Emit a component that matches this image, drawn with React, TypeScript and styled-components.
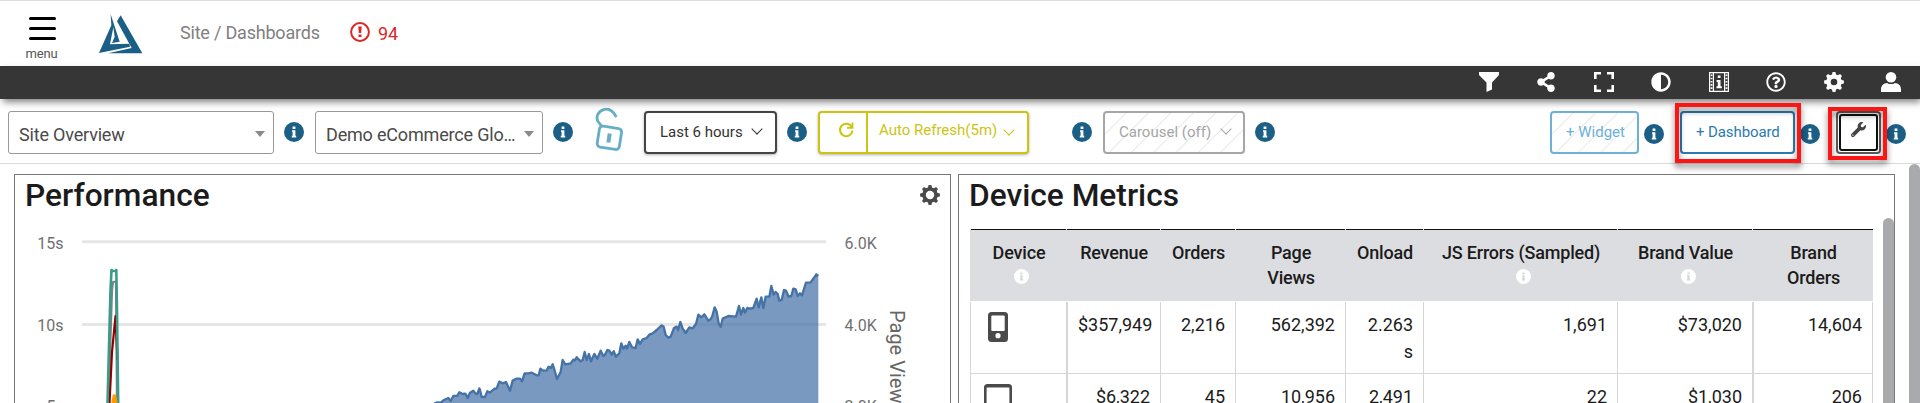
import React from 'react';
import styled, { createGlobalStyle, css } from 'styled-components';
import { FaShareAlt, FaAdjust, FaRegQuestionCircle, FaWrench } from 'react-icons/fa';

const Global = createGlobalStyle`
  * { box-sizing: border-box; }
  html, body { margin: 0; height: 100%; overflow: hidden; }
  body { background: #fff; font-family: Roboto, "Liberation Sans", sans-serif; color: #1b1b1b; }
  svg { display: block; flex: none; }
`;

const Page = styled.div`
  display: flex;
  flex-direction: column;
  width: 1920px;
  height: 403px;
  overflow: hidden;
`;

const Header = styled.header`
  display: flex;
  flex: none;
  height: 66px;
  border-top: 1px solid #dcdcdc;
  padding-left: 26px;
`;

const MenuButton = styled.div`
  width: 31px;
  padding-top: 16px;
  display: flex;
  flex-direction: column;
  align-items: center;
  font-size: 13px;
  line-height: 15px;
  letter-spacing: -0.2px;
  color: #555;
`;

const Bars = styled.div`
  display: grid;
  gap: 7px;
  margin: 0 0 6px 1px;
  i { display: block; width: 27px; height: 3px; border-radius: 1.5px; background: #000; }
`;

const LogoBox = styled.div`
  margin: 9px 0 0 37px;
`;

const Breadcrumb = styled.div`
  margin: 21px 0 0 32px;
  width: 170px;
  font-size: 18px;
  line-height: 22px;
  letter-spacing: -0.2px;
  color: #808080;
  white-space: nowrap;
`;

const Alerts = styled.div`
  display: flex;
  gap: 8px;
  padding-top: 21px;
  font-size: 18px;
  line-height: 24px;
  color: #dc2626;
`;

const IconBar = styled.nav`
  position: relative;
  z-index: 1;
  flex: none;
  height: 33px;
  padding: 0 19px 2px 1479px;
  display: flex;
  align-items: center;
  justify-content: space-between;
  background: #363636;
  color: #fff;
  box-shadow: 2px 4px 7px -1px rgba(0, 0, 0, 0.5);
`;

const Toolbar = styled.div`
  display: flex;
  flex: none;
  height: 65px;
  padding: 12px 0 0 8px;
  border-bottom: 1px solid #d9d9d9;
  white-space: nowrap;
`;

const control = css`
  height: 43px;
  border-radius: 4px;
  display: flex;
`;

const Select = styled.div<{ $w: number; $l?: number }>`
  ${control}
  width: ${p => p.$w}px;
  margin-left: ${p => p.$l ?? 0}px;
  border: 1px solid #999;
  border-radius: 3px;
  padding: 3px 8px 0 10px;
  align-items: center;
  justify-content: space-between;
  font-size: 18px;
  letter-spacing: -0.18px;
  color: #4a4a4a;
`;

const Caret = styled.i`
  border: 5px solid transparent;
  border-top: 6px solid #8a8a8a;
  border-bottom: 0;
`;

const InfoDot = styled.div<{ $l: number; $top?: number }>`
  width: 20px;
  height: 20px;
  margin: ${p => p.$top ?? 11}px 0 0 ${p => p.$l}px;
`;

const LockBox = styled.div`
  width: 31px;
  margin: -4px 0 0 22px;
`;

const Button = styled.div<{ $w: number; $l: number; $c: string; $hatch?: boolean; $flat?: boolean; $b?: string }>`
  ${control}
  width: ${p => p.$w}px;
  margin-left: ${p => p.$l}px;
  border: 2px solid ${p => p.$b ?? p.$c};
  color: ${p => p.$c};
  font-size: 15px;
  line-height: 38px;
  padding-left: 14px;
  box-shadow: ${p => (p.$flat ? 'none' : '0 1px 3px rgba(0,0,0,.3)')};
  background: ${p => p.$hatch
    ? 'repeating-linear-gradient(135deg, #fff 0 14px, #ececec 14.6px 15.2px, #fff 15.8px)'
    : '#fff'};
`;

const ButtonText = styled.span<{ $s?: number }>`
  letter-spacing: ${p => p.$s ?? 0}px;
`;

const Chevron = styled.i<{ $l: number; $top: number }>`
  width: 8px;
  height: 8px;
  margin: ${p => p.$top}px 0 0 ${p => p.$l}px;
  border: solid currentColor;
  border-width: 0 1.5px 1.5px 0;
  transform: rotate(45deg);
`;

const RefreshCell = styled.span`
  width: 48px;
  margin-left: -14px;
  padding: 8px 0 0 17px;
  border-right: 2px solid #cbc413;
`;

const RefreshText = styled.span`
  display: flex;
  padding-left: 11px;
  line-height: 34px;
`;

const ToolButton = styled.div`
  ${control}
  width: 45px;
  margin-left: 16px;
  border: 2px solid #5a5a5a;
  padding: 1px;
`;

const ToolInner = styled.div`
  flex: 1;
  border: 2px solid #111;
  border-radius: 3px;
  padding: 6px 0 0 10px;
  color: #444;
`;

const Callout = styled.div<{ $l: number; $t: number; $w: number; $h: number }>`
  position: absolute;
  z-index: 2;
  left: ${p => p.$l}px;
  top: ${p => p.$t}px;
  width: ${p => p.$w}px;
  height: ${p => p.$h}px;
  border: 4px solid #fb1515;
  filter: drop-shadow(0 4px 3px rgba(0, 0, 0, 0.5));
`;

const Main = styled.main`
  display: flex;
  flex: 1;
  min-height: 0;
  align-items: flex-start;
  padding-left: 14px;
`;

const Panel = styled.section<{ $w: number; $l?: number }>`
  width: ${p => p.$w}px;
  height: 300px;
  margin: 10px 0 0 ${p => p.$l ?? 0}px;
  border: 1px solid #777;
`;

const PanelHead = styled.div`
  display: flex;
  justify-content: space-between;
  height: 43px;
  padding: 0 10px;
`;

const Title = styled.h2`
  margin: 0;
  font-size: 31.7px;
  font-weight: 500;
  line-height: 42px;
`;

const GearBox = styled.div`
  padding-top: 10px;
`;

const TableArea = styled.div`
  display: flex;
  justify-content: space-between;
`;

const Table = styled.div`
  width: 903px;
  margin: 11px 0 0 11px;
`;

const Row = styled.div`
  display: grid;
  grid-template-columns: 96px 94px 75px 110px 78px 194px 135px 121px;
`;

const HeadCell = styled.div`
  height: 72px;
  margin-bottom: 1px;
  padding: 11px 12px 0 14px;
  background: linear-gradient(#111, #111) 1px 0 / calc(100% - 1px) 1px no-repeat, #dcdde0;
  font-size: 18px;
  font-weight: 500;
  line-height: 25px;
  letter-spacing: -0.18px;
  text-align: center;
`;

const HeadLine = styled.div`
  display: flex;
  justify-content: center;
  white-space: nowrap;
`;

const HeadInfo = styled.div`
  display: flex;
  justify-content: center;
  padding: 4px 0 0 5px;
`;

const Cell = styled.div<{ $thick?: boolean; $last?: boolean }>`
  height: 72px;
  padding: 9px 10px 0 10px;
  border-left: ${p => (p.$thick ? 2 : 1)}px solid #d6d6d6;
  border-right: ${p => (p.$last ? 1 : 0)}px solid #d6d6d6;
  border-bottom: 1px solid #d6d6d6;
  font-size: 18px;
  line-height: 27px;
  text-align: right;
`;

const DeviceIcon = styled.div<{ $l: number }>`
  padding: 1px 0 0 ${p => p.$l}px;
`;

const Thumb = styled.div<{ $w: number; $l?: number }>`
  align-self: stretch;
  width: ${p => p.$w}px;
  height: 260px;
  margin-left: ${p => p.$l ?? 0}px;
  border-radius: 6px;
  background: #a9aaae;
`;

const Info = ({ size = 20, bg = '#1b5f86', fg = '#fff' }) => (
  <svg width={size} height={size} viewBox="0 0 20 20">
    <circle cx="10" cy="10" r="10" fill={bg} />
    <path d="M8.6 4.6h2.8v2.4H8.6zM8 8.2h3.4v5.6h.8v1.6H7.8v-1.6h.8V9.8H8z" fill={fg} />
  </svg>
);

const gearPath = (outer: number, inner: number) =>
  Array.from({ length: 8 }, (_, k) => {
    const pt = (r: number, deg: number) => {
      const a = ((k * 45 + deg) * Math.PI) / 180;
      return `${(10 + r * Math.cos(a)).toFixed(2)} ${(10 + r * Math.sin(a)).toFixed(2)}`;
    };
    return `${pt(inner, -15)} L${pt(outer, -8)} L${pt(outer, 8)} L${pt(inner, 15)}`;
  }).join(' L');

const Gear = ({ color, hole }: { color: string; hole: number }) => (
  <svg width="20" height="20" viewBox="0 0 20 20">
    <path
      fill={color}
      fillRule="evenodd"
      d={`M${gearPath(10, 7.8)}Z M${10 - hole} 10a${hole} ${hole} 0 1 0 ${hole * 2} 0a${hole} ${hole} 0 1 0 ${-hole * 2} 0Z`}
    />
  </svg>
);

const Logo = () => (
  <svg width="54" height="48" viewBox="0 0 162 144" fill="#1b5f86">
    <path d="M50 13 L77 95 L54 99 L62 80 L58 52 L48 103 L106 101 L108 110 L15 129 L52 46 Z" />
    <path d="M80 16 L145 130 H42 L113 114 L69 34 Z" />
  </svg>
);

const Lock = () => (
  <svg width="31" height="48" viewBox="0 0 31 48" fill="none" stroke="#65afc4" strokeWidth="2.8">
    <rect x="3.2" y="20.2" width="22.4" height="21.2" rx="3.5" transform="rotate(9 14.4 30.8)" />
    <path d="M7 19.5 L3 14.5 C.5 10 3 4.500 8.500 2.600 C14 .8 18 3.500 21.300 10.200" />
    <path d="M14.700 26.500 L13.400 35.500" strokeWidth="4" />
  </svg>
);

const AREA =
  '-135,699 -128,697 -118,698 -108,690 -95,684 -88,693 -80,678 -68,677 -62,667 -52,672 -44,671 -37,684 -30,668 -20,662 -14,670 -8,672 -2,655 0,660 5,681 15,681 22,664 30,668 42,657 50,655 58,635 68,640 78,636 90,662 98,632 110,626 120,626 126,634 134,610 145,610 155,608 170,616 176,616 181,596 190,602 200,601 206,590 212,594 218,583 222,595 231,627 242,606 248,570 256,583 272,580 280,569 285,571 290,562 302,574 308,570 314,546 320,570 327,552 333,574 343,552 352,566 362,542 370,558 375,554 382,540 388,542 395,554 401,544 408,560 418,550 424,520 430,536 437,527 441,536 448,516 456,532 467,534 473,508 480,522 488,508 500,504 508,494 518,490 530,480 545,466 551,470 557,495 565,503 572,500 582,474 590,470 594,480 601,456 608,476 617,489 628,472 638,475 648,462 655,434 664,442 673,433 685,452 692,448 697,438 704,412 710,425 716,460 722,470 728,446 745,438 768,440 777,408 783,434 790,414 795,428 802,414 810,416 820,414 830,386 836,412 844,382 850,414 857,380 868,380 874,348 881,374 887,366 893,372 898,392 905,390 912,360 918,362 926,380 934,378 940,356 947,358 953,378 960,370 966,376 978,338 992,337 1009,313 1015,318';

const AxisLabel = styled.text`
  font-size: 16px;
  fill: #707070;
`;

const AxisTitle = styled.text`
  font-size: 20px;
  fill: #666;
`;

const PerformanceChart = () => (
  <svg width="935" height="185" viewBox="15 218 935 185">
    <path d="M82 241.700H826M82 324.500H826" stroke="#e6e6e6" strokeWidth="3" />
    <g transform="translate(480 170) scale(.33333)">
      <polygon points={`-150,760 -143,712 ${AREA} 1015,760`} fill="#4572a7" fillOpacity=".72" />
      <polyline points={`-150,760 -143,712 ${AREA}`} fill="none" stroke="#4572a7" strokeWidth="7" strokeLinejoin="round" />
    </g>
    <g fill="none" strokeWidth="2.200" strokeLinejoin="round">
      <path d="M108.500 403 L112 290 L113 282 L116 281.500 L117 403" stroke="#808080" />
      <path d="M109.500 403 L112 352 L115.500 316 L117.500 360" stroke="#8b0000" />
      <path d="M107.500 403 L110.500 290 L111.500 270 L113 271 L115.500 271 L116.300 270 L117 310 L118.200 403" stroke="#3a9b8a" strokeWidth="2.600" />
      <path d="M113 403 L114.300 396 L116 403" stroke="#ff9900" strokeWidth="3.500" />
    </g>
    <AxisLabel x="63.500" y="248.500" textAnchor="end">15s</AxisLabel>
    <AxisLabel x="63.500" y="331" textAnchor="end">10s</AxisLabel>
    <AxisLabel x="55.500" y="412" textAnchor="end">5</AxisLabel>
    <AxisLabel x="844.500" y="248.500">6.0K</AxisLabel>
    <AxisLabel x="844.500" y="331">4.0K</AxisLabel>
    <AxisLabel x="844.500" y="412">2.0K</AxisLabel>
    <AxisTitle transform="translate(890 310) rotate(90)">Page Views</AxisTitle>
  </svg>
);

const columns: { lines: string[]; info?: boolean }[] = [
  { lines: ['Device'], info: true },
  { lines: ['Revenue'] },
  { lines: ['Orders'] },
  { lines: ['Page', 'Views'] },
  { lines: ['Onload'] },
  { lines: ['JS Errors (Sampled)'], info: true },
  { lines: ['Brand Value'], info: true },
  { lines: ['Brand', 'Orders'] },
];

const rows = [
  ['$357,949', '2,216', '562,392', '2.263 s', '1,691', '$73,020', '14,604'],
  ['$6,322', '45', '10,956', '2,491', '22', '$1,030', '206'],
];

const Phone = () => (
  <svg width="20" height="30" viewBox="0 0 20 30">
    <rect width="20" height="30" rx="3.500" fill="#4a4a4a" />
    <rect x="3.300" y="3.500" width="13.400" height="15.500" rx="1" fill="#fff" />
    <circle cx="10" cy="23.700" r="2.600" fill="#fff" />
  </svg>
);

const Tablet = () => (
  <svg width="28" height="34" viewBox="0 0 28 34">
    <rect width="28" height="38" rx="3.500" fill="#4a4a4a" />
    <rect x="2.600" y="3.400" width="22.800" height="28" rx=".5" fill="#fff" />
  </svg>
);

export default function App() {
  return (
    <Page>
      <Global />
      <Header>
        <MenuButton>
          <Bars><i /><i /><i /></Bars>
          menu
        </MenuButton>
        <LogoBox><Logo /></LogoBox>
        <Breadcrumb>Site / Dashboards</Breadcrumb>
        <Alerts>
          <svg width="20" height="20" viewBox="0 0 20 20">
            <circle cx="10" cy="10" r="8.900" fill="none" stroke="#dc2626" strokeWidth="2" />
            <path d="M8.300 4.500h3.400l-.5 6.500H8.800zM8.500 12.400h3v2.700h-3z" fill="#dc2626" />
          </svg>
          94
        </Alerts>
      </Header>
      <IconBar>
        <svg width="20" height="20" viewBox="0 0 20 20" fill="#fff">
          <path d="M0 0H20V3L13 10.500V17.500L7.500 20V10.500L0 3Z" />
        </svg>
        <FaShareAlt size={20} />
        <svg width="20" height="20" viewBox="0 0 20 20" fill="none" stroke="#fff" strokeWidth="2.600">
          <path d="M1.300 7V1.300H7M13 1.300H18.700V7M18.700 13V18.700H13M7 18.700H1.300V13" />
        </svg>
        <FaAdjust size={20} />
        <svg width="20" height="20" viewBox="0 0 20 20" fill="none" stroke="#fff">
          <path d="M.6 .6H19.400V19.400H.6ZM4.400 0V20M15.600 0V20" strokeWidth="1.200" />
          <path d="M2.500 2.500V18M17.500 2.500V18" strokeWidth="1.800" strokeDasharray="1.600 1.600" />
          <path d="M8.800 3.600h2.700v2.500H8.800zM7.600 8h3.900v6.200h1.300v2H7.500v-2h1.300V10H7.600z" fill="#fff" stroke="none" />
        </svg>
        <FaRegQuestionCircle size={20} />
        <Gear color="#fff" hole={3.3} />
        <svg width="20" height="20" viewBox="0 0 20 20" fill="#fff">
          <circle cx="10" cy="5.300" r="5.300" />
          <path d="M0 20V17.500C0 13 3 11 6 10.900C8.500 12.500 11.500 12.500 14 10.900C17 11 20 13 20 17.500V20Z" />
        </svg>
      </IconBar>
      <Toolbar>
        <Select $w={266}>Site Overview<Caret /></Select>
        <InfoDot $l={10}><Info /></InfoDot>
        <Select $w={228} $l={11}>Demo eCommerce Glo…<Caret /></Select>
        <InfoDot $l={10}><Info /></InfoDot>
        <LockBox><Lock /></LockBox>
        <Button $w={133} $l={18} $c="#333" $b="#444">
          <ButtonText>Last 6 hours</ButtonText>
          <Chevron $l={10} $top={12} />
        </Button>
        <InfoDot $l={10}><Info /></InfoDot>
        <Button $w={211} $l={11} $c="#cbc413">
          <RefreshCell>
            <svg width="18" height="18" viewBox="0 0 18 18" fill="none" stroke="#cbc413">
              <path d="M14.800 6.200A6.200 6.200 0 1 0 15.400 9.500" strokeWidth="2" />
              <path d="M15.500 1.500V6.800H10" strokeWidth="1.800" />
            </svg>
          </RefreshCell>
          <RefreshText>
            <ButtonText>Auto Refresh(5m)</ButtonText>
            <Chevron $l={8} $top={13} />
          </RefreshText>
        </Button>
        <InfoDot $l={43}><Info /></InfoDot>
        <Button $w={142} $l={11} $c="#a6a6a6" $hatch $flat>
          <ButtonText>Carousel (off)</ButtonText>
          <Chevron $l={11} $top={12} />
        </Button>
        <InfoDot $l={10}><Info /></InfoDot>
        <Button $w={89} $l={275} $c="#6db0d8" $hatch $flat>
          <ButtonText>+ Widget</ButtonText>
        </Button>
        <InfoDot $l={5} $top={13}><Info /></InfoDot>
        <Button $w={115} $l={16} $c="#2a7ab0" $flat>
          <ButtonText $s={-0.1}>+ Dashboard</ButtonText>
        </Button>
        <InfoDot $l={5} $top={13}><Info /></InfoDot>
        <ToolButton><ToolInner><FaWrench size={15} /></ToolInner></ToolButton>
        <InfoDot $l={5} $top={13}><Info /></InfoDot>
      </Toolbar>
      <Main>
        <Panel $w={937}>
          <PanelHead>
            <Title>Performance</Title>
            <GearBox><Gear color="#4a4a4a" hole={4.2} /></GearBox>
          </PanelHead>
          <PerformanceChart />
        </Panel>
        <Panel $w={937} $l={7}>
          <PanelHead>
            <Title>Device Metrics</Title>
          </PanelHead>
          <TableArea>
            <Table>
              <Row>
                {columns.map(c => (
                  <HeadCell key={c.lines.join(' ')}>
                    {c.lines.map(l => <HeadLine key={l}>{l}</HeadLine>)}
                    {c.info && <HeadInfo><Info size={15} bg="#fff" fg="#d4d5d8" /></HeadInfo>}
                  </HeadCell>
                ))}
              </Row>
              {rows.map((r, i) => (
                <Row key={i}>
                  <Cell><DeviceIcon $l={i ? 3 : 7}>{i ? <Tablet /> : <Phone />}</DeviceIcon></Cell>
                  {r.map((v, j) => (
                    <Cell key={j} $thick={j === 0 || j === 6} $last={j === 6}>{v}</Cell>
                  ))}
                </Row>
              ))}
            </Table>
            <Thumb $w={11} $l={0} />
          </TableArea>
        </Panel>
        <Thumb $w={11} $l={14} />
      </Main>
      <Callout $l={1675} $t={103} $w={126} $h={60} />
      <Callout $l={1828} $t={107} $w={59} $h={53} />
    </Page>
  );
}
